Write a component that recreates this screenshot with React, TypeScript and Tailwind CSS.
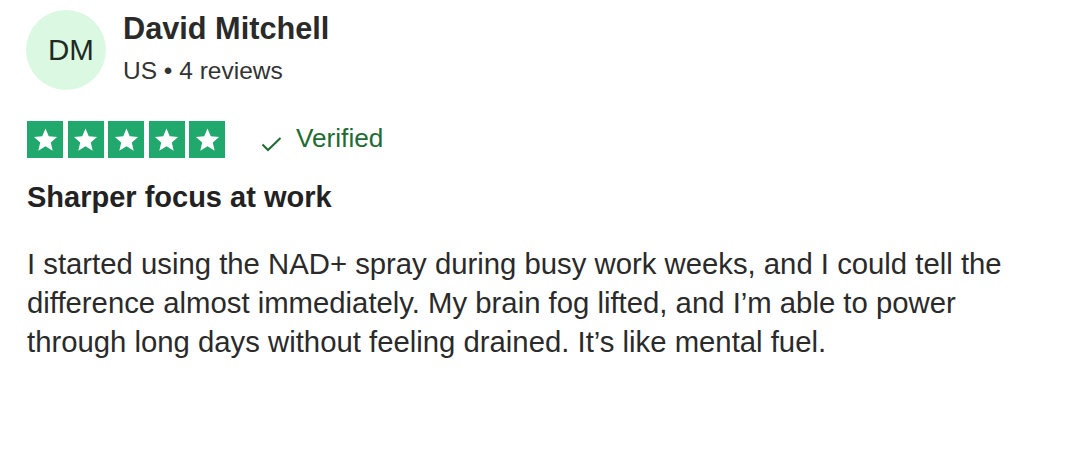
import React from "react";

function Star() {
  return (
    <div className="w-[36px] h-[37px] bg-[#21a86c] flex items-center justify-center">
      <svg width="27" height="27" viewBox="0 0 24 24">
        <path d="M12 2.2l2.9 6.9 7.4.6-5.6 4.9 1.7 7.3L12 18l-6.4 3.9 1.7-7.3-5.6-4.9 7.4-.6z" fill="#ffffff" />
      </svg>
    </div>
  );
}

export default function App() {
  return (
    <div className="w-[1080px] h-[450px] bg-white pl-[26px] pt-[10px] text-[#2a2a2a]" style={{ fontFamily: '"Liberation Sans", Arial, sans-serif' }}>
      <div className="flex">
        <div className="w-[80px] h-[80px] rounded-full bg-[#dbf8e2] flex items-center justify-center pl-[10px] text-[29.5px] text-[#1f2a22]">
          DM
        </div>
        <div className="ml-[17px] flex flex-col">
          <div className="text-[30.7px] leading-[37px] font-bold">David Mitchell</div>
          <div className="mt-[9px] text-[24.5px] leading-[29px] text-[#333]">US • 4 reviews</div>
        </div>
      </div>
      <div className="mt-[31px] flex items-center">
        <div className="flex gap-[4.5px] pl-[1px]">
          <Star />
          <Star />
          <Star />
          <Star />
          <Star />
        </div>
        <svg className="ml-[36px] mt-[8px]" width="21" height="16" viewBox="0 0 21 16">
          <path d="M1.5 8.5l5.5 5.5L19.5 2" fill="none" stroke="#1e6b33" strokeWidth="2" />
        </svg>
        <span className="ml-[14px] text-[26.2px] leading-[30px] text-[#1e6b33] -mt-[4px]">Verified</span>
      </div>
      <div className="mt-[22px] pl-[1px] text-[29px] leading-[35px] font-bold text-[#222]">Sharper focus at work</div>
      <div className="mt-[29px] pl-[1px] w-[1030px] text-[29.3px] leading-[39px] text-[#2a2a2a]">
        I started using the NAD+ spray during busy work weeks, and I could tell the difference almost immediately. My brain fog lifted, and I’m able to power through long days without feeling drained. It’s like mental fuel.
      </div>
    </div>
  );
}
